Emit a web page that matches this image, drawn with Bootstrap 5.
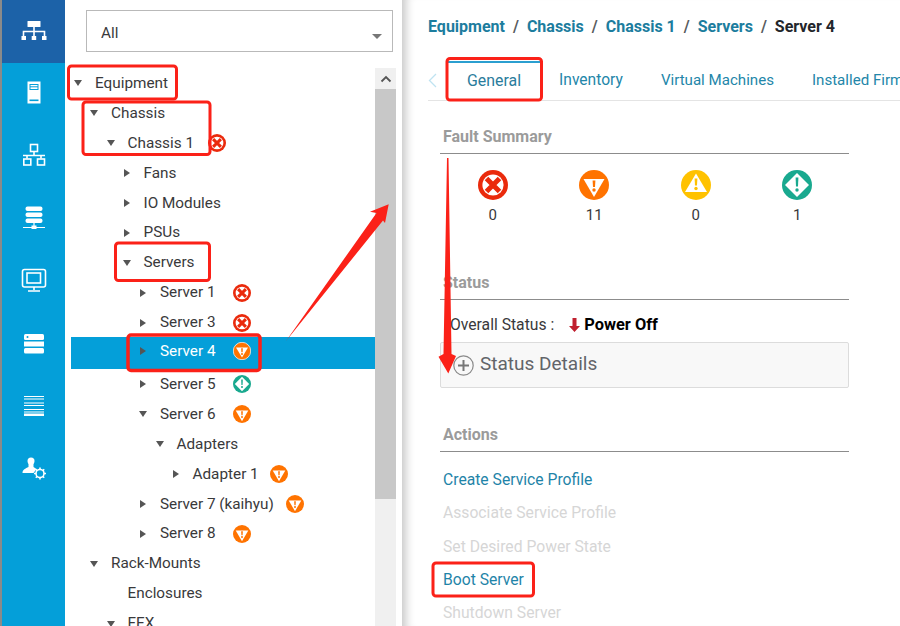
<!DOCTYPE html>
<html lang="en">
<head>
<meta charset="utf-8">
<title>Equipment / Server 4</title>
<link rel="stylesheet" href="https://cdn.jsdelivr.net/npm/bootstrap@5.3.0/dist/css/bootstrap.min.css">
<style>
html,body{height:100%;overflow:hidden;background:#fff}
body{font-family:Roboto,"Liberation Sans",sans-serif;font-size:15.3px;color:#39393b}
.shell{width:900px;height:626px;overflow:hidden;position:relative}
.rail{width:65px;height:626px;background:#049fd9;border-left:2px solid #8a8a8a;flex:none}
.rail-item{height:62.5px;display:flex;align-items:center;justify-content:center;width:63px}
.rail-item.on{background:#1c62a8}
.rail-item svg{width:28px;height:28px;fill:none;stroke:#fff;stroke-width:1.6}
.side{width:337px;flex:none;padding-left:6px;height:626px}
.picker{margin:10px 9px 16px 15px}
.picker .form-select{height:42px;border-radius:0;border-color:#b9b9b9;font-size:15.3px;color:#39393b;padding:10px 30px 6px 14px;background-size:10px 5px;background-position:right 10px top 23px;background-image:url("data:image/svg+xml,%3Csvg xmlns='http://www.w3.org/2000/svg' viewBox='0 0 10 5'%3E%3Cpath d='M0 0h10L5 5z' fill='%23777'/%3E%3C/svg%3E")}
.treewrap{width:325px}
.tree{width:304px;flex:none}
.trow{height:29.9px;display:flex;align-items:center;white-space:nowrap;padding-top:1px}
.trow.sel{height:32px;background:#049fd9;color:#fff;padding-top:0;padding-bottom:4px}
.lv0{padding-left:3px}.lv1{padding-left:19px}.lv2{padding-left:35.5px}.lv3{padding-left:51.5px}.lv4{padding-left:68px}.lv5{padding-left:84.5px}.lv6{padding-left:100.5px}
.slot{width:21px;flex:none;display:flex;align-items:center}
.cdown{width:0;height:0;border-left:4.5px solid transparent;border-right:4.5px solid transparent;border-top:6px solid #555}
.cright{width:0;height:0;margin-left:1px;border-top:4.5px solid transparent;border-bottom:4.5px solid transparent;border-left:6px solid #555}
.sname{width:73px;display:inline-block}
.tico{width:18px;height:18px;flex:none}
.tico.gap{margin-left:11px}
.tico.gapn{margin-left:12px}
.tico.near{margin-left:14px}
.scroll{width:21px;flex:none;background:#f0f0f0;height:558px}
.scroll-up{height:21px;display:flex;align-items:center;justify-content:center}
.scroll-up svg{width:12px;height:8px}
.scroll-thumb{height:410px;background:#c8c8c8}
.main{flex:1;min-width:0;height:626px;padding:0 0 0 26px;box-shadow:inset 12px 0 10px -8px rgba(0,0,0,.22);overflow:hidden}
.crumbs{margin:17px 0 24px;font-weight:700;font-size:16px;line-height:20px}
.crumbs a{color:#1c7d9e;text-decoration:none}
.crumbs .active{color:#23262b}
.tabsbar{flex-wrap:nowrap;overflow:hidden;border-bottom:1px solid #e4e4e4;height:40px;margin-right:0}
.tabsbar .nav-link{border:0;border-radius:0;border-top:2px solid transparent;background:none;padding:0 19px 2px;height:39px;display:flex;align-items:center;color:#2386a9;white-space:nowrap;margin:0;font-size:15.6px}
.tabsbar .nav-link.active{border-top-color:#2b9fd0;color:#2a7c9c;background:none;font-size:15.9px}
.tabsbar .nav-link.tabslim{font-size:15.1px}
.chev{width:20px;flex:none;display:flex;align-items:center;height:39px}
.chev svg{width:9px;height:15px}
.panelbody{width:409px;margin-left:12px}
.sect-h{font-size:16px;font-weight:700;color:#9b9b9b;padding:0 0 6px 3px;line-height:20px;border-bottom:1px solid #8c8c8c;margin:0}
.sect-a{margin-top:26px}
.sect-b{margin-top:48px}
.sect-c{margin-top:37px}
.faults{width:406px;margin:16px 0 0 2px}
.faults svg{width:30px;height:30px;display:block;margin:0 auto 5px}
.fcount{font-size:15px;line-height:20px;color:#39393b}
.overall{margin:15px 0 7px;padding-left:10px;line-height:20px;display:flex;align-items:center;font-size:15.7px}
.overall b{color:#000;font-size:16.4px}
.overall svg{width:11px;height:14px;margin:0 4px 0 15px}
.details{height:46px;border:1px solid #dcdcdc;border-radius:2px;background:#f8f8f8;padding:0 0 2px 12px;font-size:19px;color:#626469}
.details svg{width:21px;height:21px;margin:2px 6px 0 0}
.acts{margin-top:11px;font-size:15.7px}
.acts a,.acts span{display:block;height:33.25px;line-height:33.25px;padding-left:3px;text-decoration:none;color:#1f84a8}
.acts span{color:#d6d6d6}
.marks{position:absolute;left:0;top:0;width:900px;height:626px;pointer-events:none}
</style>
</head>
<body>
<svg width="0" height="0" class="d-block position-absolute">
<defs>
<symbol id="crit" viewBox="0 0 30 30"><circle cx="15" cy="15" r="15" fill="#ea2a0c"/><circle cx="15" cy="15" r="10.6" fill="#fff"/><path d="M8.5 8.5l13 13M21.5 8.5l-13 13" stroke="#ea2a0c" stroke-width="5"/></symbol>
<symbol id="maj" viewBox="0 0 30 30"><circle cx="15" cy="15" r="15" fill="#ff7300"/><path d="M4.5 9h21L15 27z" fill="#fff"/><path d="M13.6 10.5h2.8l-.4 6.5h-2z" fill="#ff7300"/><circle cx="15" cy="20" r="1.7" fill="#ff7300"/></symbol>
<symbol id="majw" viewBox="0 0 30 30"><circle cx="15" cy="15" r="14.5" fill="#ff7300" stroke="#fff" stroke-width="1.2"/><path d="M5 9h20L15 26z" fill="#fff"/><path d="M13.6 10.5h2.8l-.4 6.5h-2z" fill="#ff7300"/><circle cx="15" cy="20" r="1.7" fill="#ff7300"/></symbol>
<symbol id="warn" viewBox="0 0 30 30"><circle cx="15" cy="15" r="15" fill="#ffc200"/><path d="M15 3.5L26 22H4z" fill="#fff"/><path d="M13.6 8.5h2.8l-.4 7h-2z" fill="#ffc200"/><circle cx="15" cy="18.5" r="1.7" fill="#ffc200"/></symbol>
<symbol id="minor" viewBox="0 0 30 30"><circle cx="15" cy="15" r="15" fill="#19a98f"/><path d="M15 3l12 12-12 12L3 15z" fill="#fff"/><path d="M13.6 7.5h2.8l-.4 9h-2z" fill="#19a98f"/><circle cx="15" cy="20" r="1.7" fill="#19a98f"/></symbol>
</defs>
</svg>
<div class="shell d-flex">
  <nav class="rail d-flex flex-column">
    <div class="rail-item on"><svg viewBox="0 0 28 28"><rect x="7.5" y="4" width="13" height="6" fill="#fff" stroke="none" rx=".5"/><path d="M14 10v9M3.5 19v-4.500h21V19"/><rect x="1.5" y="19" width="4.5" height="4" fill="#fff" stroke="none"/><rect x="11.700" y="19" width="4.5" height="4" fill="#fff" stroke="none"/><rect x="22" y="19" width="4.5" height="4" fill="#fff" stroke="none"/></svg></div>
    <div class="rail-item"><svg viewBox="0 0 28 28"><rect x="7.5" y="1.5" width="13" height="22" fill="#fff" stroke="none"/><rect x="10" y="4.5" width="8" height="5" fill="none" stroke="#049fd9" stroke-width="1"/><path d="M10 6.800h8" stroke="#049fd9" stroke-width="1"/><rect x="9.500" y="19.500" width="9" height="1.600" fill="#049fd9" stroke="none"/></svg></div>
    <div class="rail-item"><svg viewBox="0 0 28 28"><rect x="10.500" y="2.500" width="7" height="7"/><path d="M14 9.500v4M3 13.500h22M7 13.500v3M21 13.500v3"/><rect x="3.800" y="17" width="7" height="6"/><rect x="17.500" y="17" width="7" height="6"/></svg></div>
    <div class="rail-item"><svg viewBox="0 0 28 28"><rect x="5.500" y="1.500" width="17" height="4.500" rx="2" fill="#fff" stroke="none"/><rect x="5.500" y="7.500" width="17" height="4.500" rx="2" fill="#fff" stroke="none"/><rect x="5.500" y="13.500" width="17" height="4.500" rx="2" fill="#fff" stroke="none"/><path d="M14 18v3M3 22.500h22" stroke-width="1.200"/><rect x="11.500" y="20.500" width="5" height="3.500" fill="#fff" stroke="none"/></svg></div>
    <div class="rail-item"><svg viewBox="0 0 28 28"><rect x="2.500" y="2.500" width="23" height="17.500" rx="2"/><rect x="7" y="6" width="13.500" height="10"/><path d="M14 20v3M8 24h12"/></svg></div>
    <div class="rail-item"><svg viewBox="0 0 28 28"><rect x="4" y="4" width="20" height="6" rx="1.500" fill="#fff" stroke="none"/><circle cx="7.500" cy="7" r="1" fill="#049fd9" stroke="none"/><rect x="4" y="11.500" width="20" height="5" fill="#fff" stroke="none"/><rect x="4" y="18" width="20" height="5.500" rx="1.500" fill="#fff" stroke="none"/></svg></div>
    <div class="rail-item"><svg viewBox="0 0 28 28"><path d="M4 4.500h20M4 7h20M4 11h20M4 13.500h20M4 17.500h20M4 20h20" stroke-width="1.100"/><rect x="4" y="21.500" width="20" height="2.500" fill="#fff" stroke="none"/></svg></div>
    <div class="rail-item"><svg viewBox="0 0 28 28"><circle cx="11" cy="6" r="3.500" fill="#fff" stroke="none"/><path d="M8.500 8h5v4l3 2-3 4H2.500c0-3.500 3-4.500 6-6z" fill="#fff" stroke="none"/><circle cx="20" cy="18.500" r="4"/><path d="M20 12.500v2M20 22.500v2M14 18.500h2M24 18.500h2M15.800 14.300l1.400 1.400M22.800 21.300l1.400 1.400M15.800 22.700l1.400-1.400M22.800 15.700l1.400-1.400"/></svg></div>
  </nav>
  <aside class="side">
    <div class="picker"><select class="form-select" aria-label="Filter"><option>All</option></select></div>
    <div class="treewrap d-flex">
      <div class="tree">
        <div class="trow lv0"><span class="slot"><i class="cdown"></i></span>Equipment</div>
        <div class="trow lv1"><span class="slot"><i class="cdown"></i></span>Chassis</div>
        <div class="trow lv2"><span class="slot"><i class="cdown"></i></span>Chassis 1<svg class="tico near"><use href="#crit"/></svg></div>
        <div class="trow lv3"><span class="slot"><i class="cright"></i></span>Fans</div>
        <div class="trow lv3"><span class="slot"><i class="cright"></i></span>IO Modules</div>
        <div class="trow lv3"><span class="slot"><i class="cright"></i></span>PSUs</div>
        <div class="trow lv3"><span class="slot"><i class="cdown"></i></span>Servers</div>
        <div class="trow lv4"><span class="slot"><i class="cright"></i></span><span class="sname">Server 1</span><svg class="tico"><use href="#crit"/></svg></div>
        <div class="trow lv4"><span class="slot"><i class="cright"></i></span><span class="sname">Server 3</span><svg class="tico"><use href="#crit"/></svg></div>
        <div class="trow sel lv4"><span class="slot"><i class="cright"></i></span><span class="sname">Server 4</span><svg class="tico"><use href="#majw"/></svg></div>
        <div class="trow lv4"><span class="slot"><i class="cright"></i></span><span class="sname">Server 5</span><svg class="tico"><use href="#minor"/></svg></div>
        <div class="trow lv4"><span class="slot"><i class="cdown"></i></span><span class="sname">Server 6</span><svg class="tico"><use href="#maj"/></svg></div>
        <div class="trow lv5"><span class="slot"><i class="cdown"></i></span>Adapters</div>
        <div class="trow lv6"><span class="slot"><i class="cright"></i></span>Adapter 1<svg class="tico gap"><use href="#maj"/></svg></div>
        <div class="trow lv4"><span class="slot"><i class="cright"></i></span>Server 7 (kaihyu)<svg class="tico gapn"><use href="#maj"/></svg></div>
        <div class="trow lv4"><span class="slot"><i class="cright"></i></span><span class="sname">Server 8</span><svg class="tico"><use href="#maj"/></svg></div>
        <div class="trow lv1"><span class="slot"><i class="cdown"></i></span>Rack-Mounts</div>
        <div class="trow lv2"><span class="slot"></span>Enclosures</div>
        <div class="trow lv2"><span class="slot"><i class="cdown"></i></span>FEX</div>
      </div>
      <div class="scroll">
        <div class="scroll-up"><svg viewBox="0 0 12 8"><path d="M1.500 6.500L6 2l4.500 4.500" fill="none" stroke="#555" stroke-width="1.800"/></svg></div>
        <div class="scroll-thumb"></div>
      </div>
    </div>
  </aside>
  <main class="main">
    <nav aria-label="breadcrumb"><ol class="breadcrumb crumbs">
      <li class="breadcrumb-item"><a href="#">Equipment</a></li>
      <li class="breadcrumb-item"><a href="#">Chassis</a></li>
      <li class="breadcrumb-item"><a href="#">Chassis 1</a></li>
      <li class="breadcrumb-item"><a href="#">Servers</a></li>
      <li class="breadcrumb-item active" aria-current="page">Server 4</li>
    </ol></nav>
    <ul class="nav nav-tabs tabsbar">
      <li class="chev"><svg viewBox="0 0 9 15"><path d="M8 1L1.500 7.500 8 14" fill="none" stroke="#bfe3f1" stroke-width="1.300"/></svg></li>
      <li class="nav-item"><a class="nav-link active" href="#">General</a></li>
      <li class="nav-item"><a class="nav-link" href="#">Inventory</a></li>
      <li class="nav-item"><a class="nav-link tabslim" href="#">Virtual Machines</a></li>
      <li class="nav-item"><a class="nav-link tabslim" href="#">Installed Firmware</a></li>
    </ul>
    <div class="panelbody">
      <h6 class="sect-h sect-a">Fault Summary</h6>
      <div class="row g-0 faults text-center">
        <div class="col-3"><svg><use href="#crit"/></svg><div class="fcount">0</div></div>
        <div class="col-3"><svg><use href="#maj"/></svg><div class="fcount">11</div></div>
        <div class="col-3"><svg><use href="#warn"/></svg><div class="fcount">0</div></div>
        <div class="col-3"><svg><use href="#minor"/></svg><div class="fcount">1</div></div>
      </div>
      <h6 class="sect-h sect-b">Status</h6>
      <div class="overall">Overall Status :<svg viewBox="0 0 11 14"><path d="M3.500 0h4v8H11l-5.500 6L0 8h3.500z" fill="#c0202f"/></svg><b>Power Off</b></div>
      <div class="details d-flex align-items-center"><svg viewBox="0 0 21 21"><circle cx="10.500" cy="10.500" r="9.700" fill="none" stroke="#8a8a8a" stroke-width="1.200"/><path d="M10.500 5v11M5 10.500h11" stroke="#777" stroke-width="2"/></svg>Status Details</div>
      <h6 class="sect-h sect-c">Actions</h6>
      <div class="acts">
        <a href="#">Create Service Profile</a>
        <span>Associate Service Profile</span>
        <span>Set Desired Power State</span>
        <a href="#">Boot Server</a>
        <span>Shutdown Server</span>
      </div>
    </div>
  </main>
  <svg class="marks" viewBox="0 0 900 626">
    <g fill="none" stroke="#fb2118" stroke-width="3">
      <rect x="68.500" y="66" width="108" height="33" rx="3"/>
      <rect x="83" y="102" width="127" height="52.500" rx="3"/>
      <rect x="115.500" y="243" width="94" height="37.500" rx="3"/>
      <rect x="128" y="335" width="132" height="35.500" rx="3" stroke-width="3.500"/>
      <rect x="447" y="58.500" width="94.500" height="41.500" rx="3"/>
      <rect x="433" y="563" width="100.500" height="33" rx="3"/>
    </g>
    <polygon fill="#fb2118" points="286,341 376.500,213 370,211.700 388.700,204.300 385,223 383,220.500"/>
    <polygon fill="#fb2118" points="447,158 448.500,158 451.500,354 456,356 448.300,373.500 438.500,356.700 443.500,354"/>
  </svg>
</div>
<script src="https://cdn.jsdelivr.net/npm/bootstrap@5.3.0/dist/js/bootstrap.bundle.min.js"></script>
</body>
</html>
